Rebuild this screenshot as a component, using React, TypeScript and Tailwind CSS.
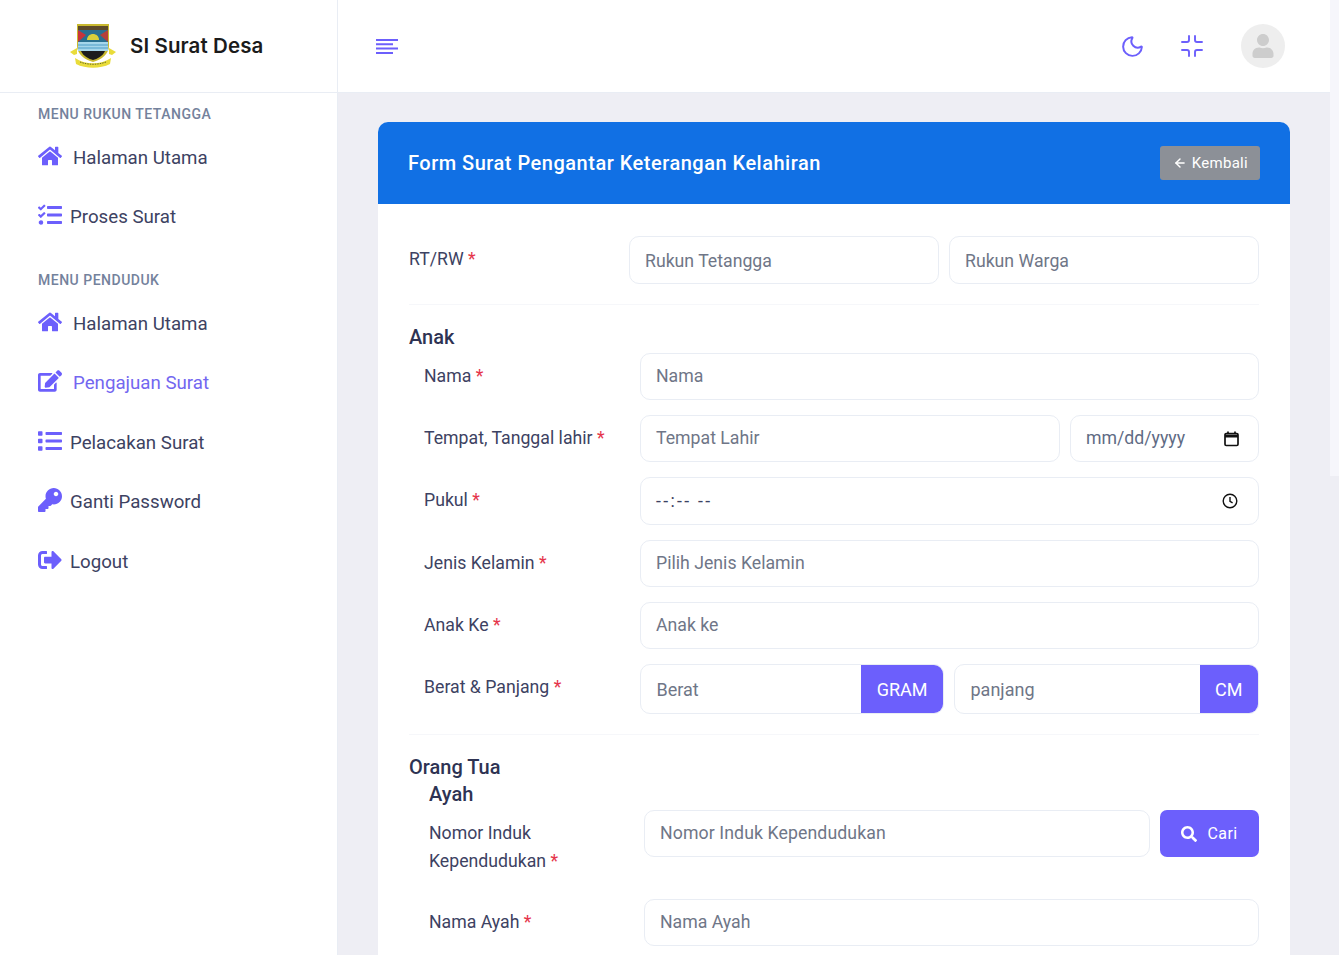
import { ArrowLeft, Moon } from "lucide-react"
import { FaEdit, FaHome, FaKey, FaList, FaSearch, FaSignOutAlt, FaTasks, FaUser } from "react-icons/fa"
import type { ReactNode } from "react"

const BODY = "font-['Roboto','Liberation_Sans',sans-serif]"

function NavItem({ icon, label, active, gap }: { icon: ReactNode; label: string; active?: boolean; gap: string }) {
  return (
    <div className={`flex h-[59.5px] items-center pl-[38px] text-[18.7px] ${gap} ${active ? "text-[#7367f0]" : "text-[#3d4262]"}`}>
      <span className="text-[#6c5ffc] text-[24px] -mt-1">{icon}</span>
      <span>{label}</span>
    </div>
  )
}

function Req({ children }: { children: ReactNode }) {
  return (
    <>
      {children} <span className="text-[#e5354b]">*</span>
    </>
  )
}

function Field({ placeholder, className = "", tall }: { placeholder: string; className?: string; tall?: boolean }) {
  return (
    <div className={`flex items-center rounded-[10px] border border-[#e9edf4] bg-white pl-[15px] text-[17.7px] text-[#6f7687] ${tall ? "h-[48px] pt-[2px]" : "h-[47px]"} ${className}`}>
      {placeholder}
    </div>
  )
}

function Row({ label, children }: { label: ReactNode; children: ReactNode }) {
  return (
    <div className="flex h-[47.2px] pl-[15px] text-[17.7px] text-[#3d4262]">
      <div className="w-[216px] shrink-0 pt-[10px] leading-[27px]">{label}</div>
      <div className="flex flex-1 gap-[10px]">{children}</div>
    </div>
  )
}

function Addon({ placeholder, unit, className }: { placeholder: string; unit: string; className: string }) {
  return (
    <div className={`flex h-[50px] overflow-hidden rounded-[10px] border border-[#e9edf4] text-[18px] ${className}`}>
      <div className="flex flex-1 items-center pl-[15.500px] pt-[1px] text-[#6f7687]">{placeholder}</div>
      <div className="flex items-center bg-[#6c5ffc] px-[15.500px] pt-[1px] text-white">{unit}</div>
    </div>
  )
}

function CompressIcon() {
  return (
    <svg width="22" height="22" viewBox="0 0 22 22" className="ml-[36px] text-[#6c5ffc]" fill="none" stroke="currentColor" strokeWidth="1.9" strokeLinecap="round">
      <path d="M8 1v4a2 2 0 0 1-2 2H1M14 1v4a2 2 0 0 0 2 2h5M1 15h5a2 2 0 0 1 2 2v4M21 15h-5a2 2 0 0 0-2 2v4" />
    </svg>
  )
}

export default function App() {
  return (
    <div className={`flex h-[955px] overflow-hidden bg-[#eeeef4] ${BODY}`}>
      <aside className="flex w-[338px] shrink-0 flex-col border-r border-[#e9edf4] bg-white">
        <div className="flex h-[93px] shrink-0 items-center border-b border-[#e9edf4] pl-[69px]">
          <svg width="48" height="48" viewBox="0 0 48 48" className="mr-[13px]">
            <path d="M8 2h32v22c0 8-8 14-16 16C16 38 8 32 8 24z" fill="#c9b92f" />
            <rect x="9" y="4" width="30" height="4" fill="#5d4a2a" />
            <path d="M9 8h30v12H9z" fill="#2a6f8f" />
            <path d="M9 8l8 5-8 7z" fill="#c8343a" />
            <path d="M39 8l-8 5 8 7z" fill="#b5403a" />
            <path d="M18 18c0-8 12-8 12 0z" fill="#d8cf3a" />
            <path d="M9 20h30v9H9z" fill="#a6d6ea" />
            <path d="M9 23h30M9 26h30" stroke="#4d9cc6" strokeWidth="1" />
            <path d="M12 29h24c-2 5-8 8-12 9-4-1-10-4-12-9z" fill="#1d1d1d" />
            <path d="M8 26L1 30l4 3 3-1zM40 26l7 4-4 3-3-1z" fill="#e9dc3a" />
            <path d="M6 36c10 7 26 7 36 0l-1 6c-10 5-24 5-34 0z" fill="#e9dc3a" />
            <path d="M11 40c8 3 18 3 26 0" stroke="#6a6a2a" strokeWidth="1" fill="none" strokeDasharray="1.5 1" />
          </svg>
          <span className="font-['Inter',sans-serif] text-[20.5px] font-semibold tracking-[0.1px] text-[#1b1b1b]">SI Surat Desa</span>
        </div>
        <div className="pl-[38px] pt-[14px] text-[14px] font-medium leading-[15px] tracking-[0.5px] text-[#74829c]">MENU RUKUN TETANGGA</div>
        <div className="mt-[6px]">
          <NavItem icon={<FaHome />} label="Halaman Utama" gap="gap-[11px]" />
          <NavItem icon={<FaTasks />} label="Proses Surat" gap="gap-[8px]" />
        </div>
        <div className="pl-[38px] pt-[26px] text-[14px] font-medium leading-[15px] tracking-[0.5px] text-[#74829c]">MENU PENDUDUK</div>
        <div className="mt-[6px]">
          <NavItem icon={<FaHome />} label="Halaman Utama" gap="gap-[11px]" />
          <NavItem icon={<FaEdit />} label="Pengajuan Surat" gap="gap-[11px]" active />
          <NavItem icon={<FaList />} label="Pelacakan Surat" gap="gap-[8px]" />
          <NavItem icon={<FaKey />} label="Ganti Password" gap="gap-[8px]" />
          <NavItem icon={<FaSignOutAlt />} label="Logout" gap="gap-[8px]" />
        </div>
      </aside>

      <div className="flex min-w-0 flex-1 flex-col">
        <header className="flex h-[93px] shrink-0 items-center border-b border-[#e9edf4] bg-white pl-[38px] pr-[45px]">
          <svg width="22" height="15" viewBox="0 0 22 15" className="text-[#6c5ffc]" fill="none" stroke="currentColor" strokeWidth="2">
            <path d="M0 1h22M0 5.300h17M0 9.600h22M0 13.900h17" />
          </svg>
          <div className="flex-1" />
          <Moon className="size-[25px] text-[#6c5ffc]" strokeWidth={1.9} />
          <CompressIcon />
          <div className="ml-[38px] flex size-[44px] items-center justify-center rounded-full bg-[#eeeeee] text-[#cdcdcd]">
            <FaUser className="size-[24px]" />
          </div>
        </header>

        <main className="flex-1 px-[40px] pt-[29px]">
          <div className="rounded-t-[10px] bg-white">
            <div className="flex h-[82px] items-center justify-between rounded-t-[10px] bg-[#1170e4] px-[30px]">
              <h1 className="text-[20px] font-medium tracking-[0.5px] text-white">Form Surat Pengantar Keterangan Kelahiran</h1>
              <div className="flex h-[34px] items-center gap-[5px] rounded-[3px] bg-[#8c9097] pl-[13px] pr-[12px] text-[15px] tracking-[0.3px] text-white">
                <ArrowLeft className="size-[14px]" strokeWidth={2.5} />
                Kembali
              </div>
            </div>

            <div className="px-[31px] pt-[32px]">
              <div className="flex h-[48px] text-[17.7px] text-[#3d4262]">
                <div className="w-[220px] shrink-0 pt-[10px] leading-[27px]"><Req>RT/RW</Req></div>
                <div className="flex flex-1 gap-[10px]">
                  <Field placeholder="Rukun Tetangga" className="flex-1" tall />
                  <Field placeholder="Rukun Warga" className="flex-1" tall />
                </div>
              </div>
              <div className="mt-[20px] border-t border-[#f6f7fa]" />

              <h2 className="mt-[20px] text-[20px] font-medium leading-[24px] text-[#2e3353]">Anak</h2>
              <div className="mt-[4px] flex flex-col gap-[15px]">
                <Row label={<Req>Nama</Req>}><Field placeholder="Nama" className="flex-1" /></Row>
                <Row label={<Req>Tempat, Tanggal lahir</Req>}>
                  <Field placeholder="Tempat Lahir" className="w-[420px]" />
                  <div className="flex h-[47px] flex-1 items-center justify-between rounded-[10px] border border-[#e9edf4] pl-[15px] pr-[19px] text-[17.7px] text-[#5f6b84]">
                    mm/dd/yyyy
                    <svg width="15" height="16" viewBox="0 0 15 16" fill="none" stroke="#111" strokeWidth="1.7">
                      <rect x="1" y="2.500" width="13" height="12" rx="1.200" />
                      <path d="M1 5h13" strokeWidth="3" />
                      <path d="M4 0.500v2M11 0.500v2" />
                    </svg>
                  </div>
                </Row>
                <Row label={<Req>Pukul</Req>}>
                  <div className="flex h-[47.500px] flex-1 items-center justify-between rounded-[10px] border border-[#e9edf4] pl-[15px] pr-[20px] text-[17.7px] tracking-[2.300px] text-[#3d4262]">
                    --:-- --
                    <svg width="16" height="16" viewBox="0 0 16 16" fill="none" stroke="#111" strokeWidth="1.4">
                      <circle cx="8" cy="8" r="6.800" />
                      <path d="M8 4v4.300l2.600 1.500" />
                    </svg>
                  </div>
                </Row>
                <Row label={<Req>Jenis Kelamin</Req>}><Field placeholder="Pilih Jenis Kelamin" className="flex-1" /></Row>
                <Row label={<Req>Anak Ke</Req>}><Field placeholder="Anak ke" className="flex-1" /></Row>
                <Row label={<Req>Berat &amp; Panjang</Req>}>
                  <div className="flex flex-1 gap-[10px]">
                    <Addon placeholder="Berat" unit="GRAM" className="w-[304px]" />
                    <Addon placeholder="panjang" unit="CM" className="flex-1" />
                  </div>
                </Row>
              </div>
              <div className="mt-[23px] border-t border-[#f6f7fa]" />

              <h2 className="mt-[20px] text-[20px] font-medium leading-[24px] text-[#2e3353]">Orang Tua</h2>
              <h2 className="ml-[20px] mt-[3px] text-[20px] font-medium leading-[24px] text-[#2e3353]">Ayah</h2>

              <div className="mt-[4px] flex pl-[20px] text-[17.7px] text-[#3d4262]">
                <div className="w-[215px] shrink-0 pt-[9px] leading-[28px]">Nomor Induk<br /><Req>Kependudukan</Req></div>
                <div className="flex h-[47px] flex-1 gap-[10px]">
                  <Field placeholder="Nomor Induk Kependudukan" className="flex-1 tracking-[0.1px]" />
                  <div className="flex w-[99px] items-center justify-center gap-[10px] rounded-[7px] bg-[#6c5ffc] text-[16px] tracking-[0.4px] text-white">
                    <FaSearch className="size-[16px]" />
                    <span className="pt-[1px]">Cari</span>
                  </div>
                </div>
              </div>

              <div className="mt-[24px] flex pl-[20px] text-[17.7px] text-[#3d4262]">
                <div className="w-[215px] shrink-0 pt-[10px] leading-[27px]"><Req>Nama Ayah</Req></div>
                <Field placeholder="Nama Ayah" className="flex-1" />
              </div>
              <div className="h-[40px]" />
            </div>
          </div>
        </main>
      </div>

      <div className="w-[9px] shrink-0 bg-[#eeeef4]">
        <div className="h-[476px] bg-[#f6f6fb]" />
      </div>
    </div>
  )
}
